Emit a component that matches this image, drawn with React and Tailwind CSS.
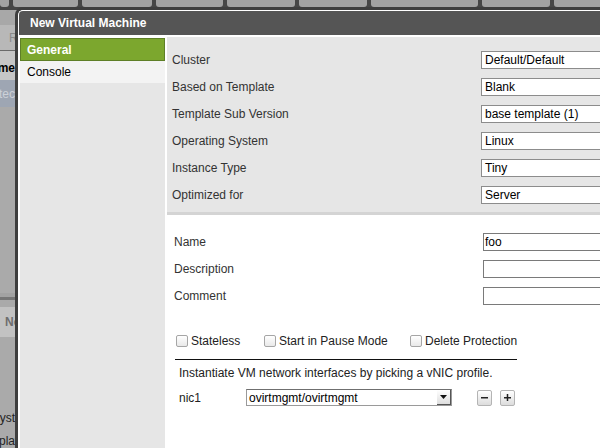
// App.jsx — "New Virtual Machine" dialog over the admin portal
import React from "react";

// widths of the grey tab strip along the top of the page
const tabs = [9, 65, 70, 67, 68, 68, 107, 68, 60];

const generalRows = [
    ["Cluster", "Default/Default"],
    ["Based on Template", "Blank"],
    ["Template Sub Version", "base template (1)"],
    ["Operating System", "Linux"],
    ["Instance Type", "Tiny"],
    ["Optimized for", "Server"],
];

const textRows = [
    ["Name", "foo"],
    ["Description", ""],
    ["Comment", ""],
];

function Checkbox({ label, className = "" }) {
    return (
        <label className={`flex items-center ${className}`}>
            <span className="w-[12px] h-[12px] rounded-[2px] border border-[#a6a6a6] bg-linear-to-b from-white to-[#e9e9e9]" />
            <span className="ml-[3px] text-[#222]">{label}</span>
        </label>
    );
}

function SmallButton({ plus = false }) {
    return (
        <button className="w-[15px] h-[16px] flex items-center justify-center rounded-[2px] border border-[#b4b4b4] bg-linear-to-b from-white to-[#dcdcdc]">
            <svg width="9" height="9" viewBox="0 0 9 9">
                <rect x="1" y="4" width="7" height="1.5" fill="#222" />
                {plus && <rect x="3.75" y="1" width="1.5" height="7" fill="#222" />}
            </svg>
        </button>
    );
}

export default function App() {
    return (
        <div className="relative w-[600px] h-[448px] overflow-hidden bg-[#aaaaaa] font-['Liberation_Sans',Arial,sans-serif] text-[12px]">
            {/* фоновая страница */}
            <div className="flex flex-col h-full">
                <div className="h-[10px] shrink-0 bg-[#464646] flex items-start gap-[4px]">
                    {tabs.map((w, i) => (
                        <div key={i} className="h-[7px] shrink-0 rounded-b-[3px] bg-[#a2a2a2]" style={{ width: w }} />
                    ))}
                </div>
                <div className="w-[15px] flex-1 flex flex-col overflow-hidden whitespace-nowrap">
                    <div className="h-[15px] shrink-0 bg-[#a8a8a8]" />
                    <div className="h-[25px] shrink-0 bg-[#b8b8b8] pl-[9px] flex items-center text-[#8a8a8a]">R</div>
                    <div className="h-px shrink-0 bg-[#6a6a6a]" />
                    <div className="h-[29px] shrink-0 bg-[#c6c6c6] flex justify-end pt-[10px] font-bold text-black leading-[14px]">me</div>
                    <div className="h-[27px] shrink-0 bg-[#9ea6b3] flex items-center justify-end text-[#cdd1d8]">tec</div>
                    <div className="h-[186px] shrink-0 bg-[#aaaaaa]" />
                    <div className="h-[4px] shrink-0 bg-[#a2a2a2]" />
                    <div className="h-[3px] shrink-0 bg-[#767676]" />
                    <div className="h-[7px] shrink-0 bg-[#aaaaaa]" />
                    <div className="h-[30px] shrink-0 bg-[#c2c2c2] pl-[5px] flex items-center font-bold text-[#6e6e6e]">Ne</div>
                    <div className="flex-1 bg-[#aaaaaa] flex flex-col items-end text-[#222] leading-[23px] pt-[70px]">
                        <span>yst</span>
                        <span className="-mr-[6px]">play</span>
                    </div>
                </div>
            </div>

            {/* модальное окно */}
            <div className="absolute left-[15px] top-[7px] w-[620px] h-[460px] rounded-tl-[8px] bg-[#3e3e3e] pl-[3px] pt-[3px]">
                <div className="h-full flex flex-col overflow-hidden rounded-tl-[5px] border-l border-t border-white bg-white">
                    <div className="h-[24px] shrink-0 bg-[#555555] flex items-center pl-[11px] text-white font-bold">
                        New Virtual Machine
                    </div>

                    <div className="flex flex-1 mt-[2px]">
                        {/* левое меню */}
                        <div className="w-[145px] ml-[1px] mt-[1px] bg-[#e6e6e6] flex flex-col">
                            <div className="h-[23px] border border-[#5e7f27] bg-[#7ca72e] pl-[6px] flex items-center font-bold text-white">
                                General
                            </div>
                            <div className="h-[22px] bg-[#f3f3f3] pl-[7px] flex items-center text-black">Console</div>
                        </div>

                        {/* содержимое */}
                        <div className="ml-[2px] flex-1 flex flex-col">
                            <div className="bg-[#e6e6e6] pl-[5px] pt-[9px] pb-[4px] border-b-[3px] border-[#d4d4d4]">
                                {generalRows.map(([label, value]) => (
                                    <div key={label} className="h-[27px] flex items-center">
                                        <span className="w-[309px] shrink-0 text-[#333]">{label}</span>
                                        <div className="flex-1 h-[18px] bg-white border border-[#8c8c8c] pl-[3px] flex items-center text-black">
                                            {value}
                                        </div>
                                    </div>
                                ))}
                            </div>

                            <div className="pl-[7px] pt-[13px]">
                                {textRows.map(([label, value]) => (
                                    <div key={label} className="h-[27px] flex items-center">
                                        <span className="w-[309px] shrink-0 text-[#333]">{label}</span>
                                        <div className="flex-1 h-[18px] bg-white border border-[#7a7a7a] pl-[1px] flex items-center text-black">
                                            {value}
                                        </div>
                                    </div>
                                ))}

                                <div className="mt-[22px] h-[20px] pl-[2px] flex items-center">
                                    <Checkbox label="Stateless" className="w-[88px]" />
                                    <Checkbox label="Start in Pause Mode" className="w-[146px]" />
                                    <Checkbox label="Delete Protection" />
                                </div>

                                <div className="mt-[8px] ml-[1px] w-[342px] h-px bg-[#111]" />

                                <p className="mt-[5px] pl-[5px] leading-[16px] text-[#222]">
                                    Instantiate VM network interfaces by picking a vNIC profile.
                                </p>

                                <div className="mt-[8px] pl-[5px] h-[17px] flex items-center">
                                    <span className="w-[67px] shrink-0 text-[#222]">nic1</span>
                                    <div className="w-[206px] h-[17px] bg-white border border-[#9a9a9a] border-t-[#6f6f6f] pl-[2px] flex items-center justify-between text-black">
                                        <span>ovirtmgmt/ovirtmgmt</span>
                                        <span className="w-[14px] h-[15px] bg-linear-to-b from-white to-[#dedede] border-r border-b border-[#555] flex items-center justify-center">
                                            <svg width="7" height="4" viewBox="0 0 7 4">
                                                <path d="M0 0h7L3.5 4z" fill="#111" />
                                            </svg>
                                        </span>
                                    </div>
                                    <div className="ml-[25px] flex gap-[8px]">
                                        <SmallButton />
                                        <SmallButton plus />
                                    </div>
                                </div>
                            </div>
                        </div>
                    </div>
                </div>
            </div>
        </div>
    );
}
